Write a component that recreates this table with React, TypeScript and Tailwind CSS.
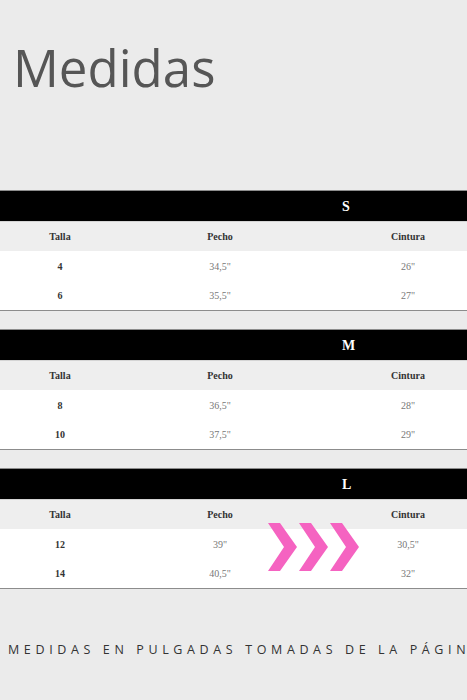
import React from 'react';

type Row = { talla: string; pecho: string; cintura: string };

const tables: { size: string; rows: Row[] }[] = [
  { size: 'S', rows: [{ talla: '4', pecho: '34,5"', cintura: '26"' }, { talla: '6', pecho: '35,5"', cintura: '27"' }] },
  { size: 'M', rows: [{ talla: '8', pecho: '36,5"', cintura: '28"' }, { talla: '10', pecho: '37,5"', cintura: '29"' }] },
  { size: 'L', rows: [{ talla: '12', pecho: '39"', cintura: '30,5"' }, { talla: '14', pecho: '40,5"', cintura: '32"' }] },
];

function Chevrons() {
  return (
    <svg width="96" height="50" viewBox="0 0 96 50" className="absolute left-[267px] top-[53px]">
      {[0, 31, 62].map(x => (
        <polygon
          key={x}
          points={`${x + 1},1 ${x + 13},1 ${x + 30},25 ${x + 13},49 ${x + 1},49 ${x + 17},25`}
          fill="#f563c1"
        />
      ))}
    </svg>
  );
}

function SizeTable({ size, rows, arrows }: { size: string; rows: Row[]; arrows?: boolean }) {
  return (
    <div className="relative w-full overflow-hidden border-y border-[#8c8c8c] font-['Liberation_Serif',serif]">
      <div className="h-[30px] bg-black pl-[342px] flex items-center text-[14px] font-bold text-white">{size}</div>
      <div className="grid grid-cols-[120px_200px_176px] w-[496px] h-[30px] items-center bg-[#eeeeee] border-t border-[#d4d4d4] text-[10px] font-bold text-[#333] text-center">
        <span>Talla</span>
        <span>Pecho</span>
        <span>Cintura</span>
      </div>
      {rows.map((r, i) => (
        <div
          key={r.talla}
          className={`grid grid-cols-[120px_200px_176px] w-[496px] items-center bg-white text-[10px] text-center ${i === 0 ? 'h-[30px]' : 'h-[29px]'}`}
        >
          <span className="font-bold text-[#333]">{r.talla}</span>
          <span className="text-[#777]">{r.pecho}</span>
          <span className="text-[#777]">{r.cintura}</span>
        </div>
      ))}
      {arrows && <Chevrons />}
    </div>
  );
}

export default function App() {
  return (
    <div className="w-[467px] h-[700px] overflow-hidden bg-[#ebebeb] flex flex-col">
      <h1 className="mt-[41px] pl-[13px] text-[51px] leading-[52px] text-[#565656] font-['Open_Sans',sans-serif] font-normal">
        Medidas
      </h1>
      <div className="mt-[97px] flex flex-col gap-[18px]">
        {tables.map((t, i) => (
          <SizeTable key={t.size} size={t.size} rows={t.rows} arrows={i === 2} />
        ))}
      </div>
      <p className="mt-[53px] pl-[8px] whitespace-nowrap text-[12.5px] leading-[16px] tracking-[0.37em] text-[#333] font-['Open_Sans',sans-serif]">
        MEDIDAS EN PULGADAS TOMADAS DE LA PÁGINA WEB
      </p>
    </div>
  );
}
